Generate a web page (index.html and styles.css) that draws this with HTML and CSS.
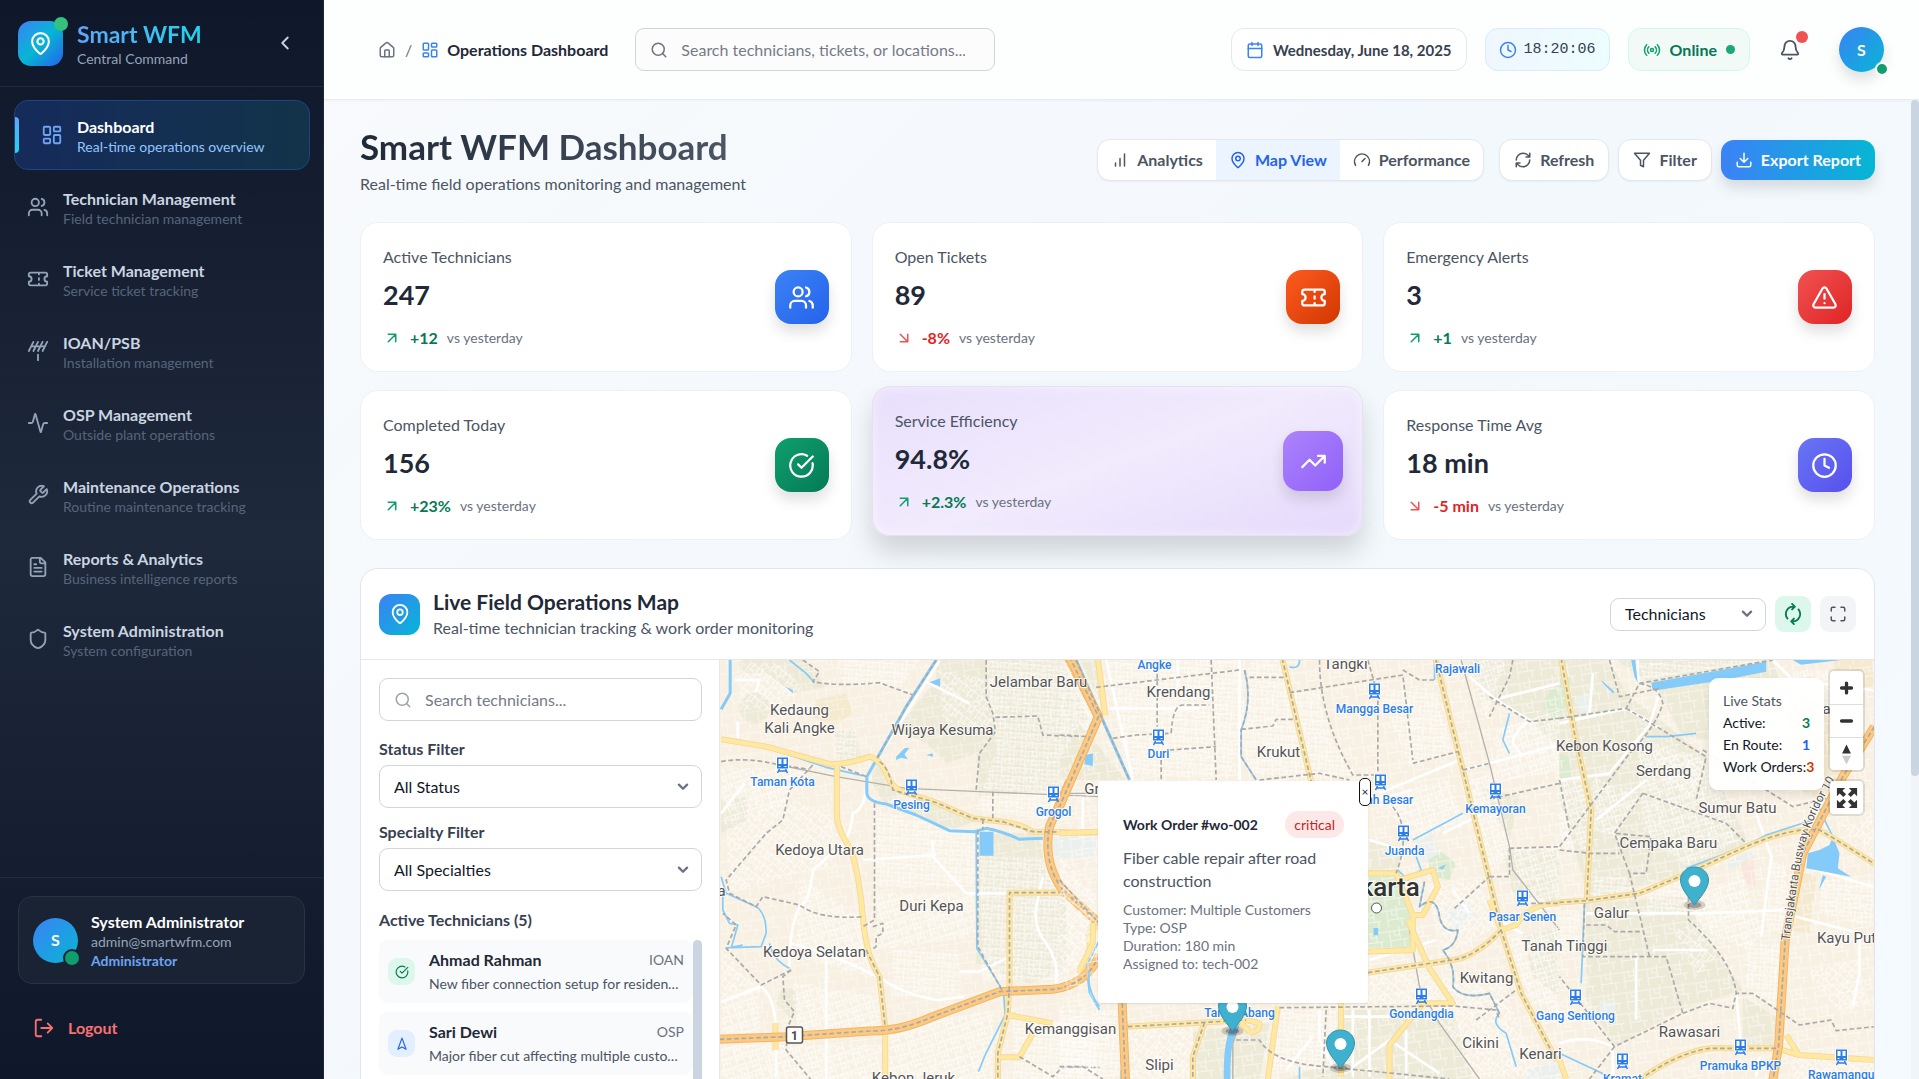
FILE: index.html
```html
<!DOCTYPE html>
<html lang="en">
<head>
<meta charset="utf-8">
<meta name="viewport" content="width=device-width, initial-scale=1">
<title>Smart WFM Dashboard</title>
<link rel="stylesheet" href="styles.css">
</head>
<body>
<svg class="sprite" aria-hidden="true">
  <symbol id="i-pin" viewBox="0 0 24 24"><path d="M20 10c0 4.993-5.539 10.193-7.399 11.799a1 1 0 0 1-1.202 0C9.539 20.193 4 14.993 4 10a8 8 0 0 1 16 0"/><circle cx="12" cy="10" r="3"/></symbol>
  <symbol id="i-left" viewBox="0 0 24 24"><path d="m15 18-6-6 6-6"/></symbol>
  <symbol id="i-down" viewBox="0 0 24 24"><path d="m5 8 7 7 7-7"/></symbol>
  <symbol id="i-grid" viewBox="0 0 24 24"><rect width="7" height="9" x="3" y="3" rx="1"/><rect width="7" height="5" x="14" y="3" rx="1"/><rect width="7" height="9" x="14" y="12" rx="1"/><rect width="7" height="5" x="3" y="16" rx="1"/></symbol>
  <symbol id="i-users" viewBox="0 0 24 24"><path d="M16 21v-2a4 4 0 0 0-4-4H6a4 4 0 0 0-4 4v2"/><circle cx="9" cy="7" r="4"/><path d="M22 21v-2a4 4 0 0 0-3-3.87M16 3.13a4 4 0 0 1 0 7.75"/></symbol>
  <symbol id="i-ticket" viewBox="0 0 24 24"><path d="M2 9a3 3 0 0 1 0 6v2a2 2 0 0 0 2 2h16a2 2 0 0 0 2-2v-2a3 3 0 0 1 0-6V7a2 2 0 0 0-2-2H4a2 2 0 0 0-2 2ZM13 5v2M13 17v2M13 11v2"/></symbol>
  <symbol id="i-antenna" viewBox="0 0 24 24"><path d="M2 12 7 2M7 12l5-10M12 12l5-10M17 12l5-10M4.500 7h15M12 16v6"/></symbol>
  <symbol id="i-activity" viewBox="0 0 24 24"><path d="M22 12h-2.480a2 2 0 0 0-1.930 1.460l-2.350 8.360a.25.25 0 0 1-.48 0L9.240 2.180a.25.25 0 0 0-.48 0l-2.350 8.360A2 2 0 0 1 4.490 12H2"/></symbol>
  <symbol id="i-wrench" viewBox="0 0 24 24"><path d="M14.700 6.300a1 1 0 0 0 0 1.400l1.600 1.600a1 1 0 0 0 1.400 0l3.770-3.770a6 6 0 0 1-7.940 7.940l-6.910 6.910a2.120 2.120 0 0 1-3-3l6.910-6.910a6 6 0 0 1 7.940-7.940l-3.760 3.760z"/></symbol>
  <symbol id="i-file" viewBox="0 0 24 24"><path d="M15 2H6a2 2 0 0 0-2 2v16a2 2 0 0 0 2 2h12a2 2 0 0 0 2-2V7ZM14 2v4a2 2 0 0 0 2 2h4M10 9H8M16 13H8M16 17H8"/></symbol>
  <symbol id="i-shield" viewBox="0 0 24 24"><path d="M20 13c0 5-3.500 7.500-7.660 8.950a1 1 0 0 1-.67-.01C7.500 20.500 4 18 4 13V6a1 1 0 0 1 1-1c2 0 4.500-1.200 6.240-2.720a1.170 1.170 0 0 1 1.520 0C14.510 3.810 17 5 19 5a1 1 0 0 1 1 1z"/></symbol>
  <symbol id="i-logout" viewBox="0 0 24 24"><path d="M9 21H5a2 2 0 0 1-2-2V5a2 2 0 0 1 2-2h4M16 17l5-5-5-5M21 12H9"/></symbol>
  <symbol id="i-home" viewBox="0 0 24 24"><path d="M15 21v-8a1 1 0 0 0-1-1h-4a1 1 0 0 0-1 1v8"/><path d="M3 10a2 2 0 0 1 .709-1.528l7-5.999a2 2 0 0 1 2.582 0l7 5.999A2 2 0 0 1 21 10v9a2 2 0 0 1-2 2H5a2 2 0 0 1-2-2z"/></symbol>
  <symbol id="i-search" viewBox="0 0 24 24"><circle cx="11" cy="11" r="8"/><path d="m21 21-4.300-4.300"/></symbol>
  <symbol id="i-calendar" viewBox="0 0 24 24"><path d="M8 2v4M16 2v4M3 10h18"/><rect width="18" height="18" x="3" y="4" rx="2"/></symbol>
  <symbol id="i-clock" viewBox="0 0 24 24"><circle cx="12" cy="12" r="10"/><path d="M12 6v6l4 2"/></symbol>
  <symbol id="i-radio" viewBox="0 0 24 24"><path d="M4.900 19.100C1 15.200 1 8.800 4.900 4.900M7.800 16.200c-2.300-2.300-2.300-6.100 0-8.500M16.200 7.800c2.300 2.300 2.300 6.100 0 8.500M19.100 4.900C23 8.800 23 15.100 19.100 19"/><circle cx="12" cy="12" r="2"/></symbol>
  <symbol id="i-bell" viewBox="0 0 24 24"><path d="M10.268 21a2 2 0 0 0 3.464 0M3.262 15.326A1 1 0 0 0 4 17h16a1 1 0 0 0 .74-1.673C19.410 13.956 18 12.499 18 8A6 6 0 0 0 6 8c0 4.499-1.411 5.956-2.738 7.326"/></symbol>
  <symbol id="i-bars" viewBox="0 0 24 24"><path d="M12 20V10M18 20V4M6 20v-4"/></symbol>
  <symbol id="i-gauge" viewBox="0 0 24 24"><path d="m12 14 4-4M3.340 19a10 10 0 1 1 17.320 0"/></symbol>
  <symbol id="i-refresh" viewBox="0 0 24 24"><path d="M3 12a9 9 0 0 1 9-9 9.750 9.750 0 0 1 6.740 2.740L21 8M21 3v5h-5M21 12a9 9 0 0 1-9 9 9.750 9.750 0 0 1-6.740-2.740L3 16M8 16H3v5"/></symbol>
  <symbol id="i-filter" viewBox="0 0 24 24"><path d="M22 3H2l8 9.460V19l4 2v-8.540z"/></symbol>
  <symbol id="i-download" viewBox="0 0 24 24"><path d="M21 15v4a2 2 0 0 1-2 2H5a2 2 0 0 1-2-2v-4M7 10l5 5 5-5M12 15V3"/></symbol>
  <symbol id="i-up" viewBox="0 0 24 24"><path d="M7 7h10v10M7 17 17 7"/></symbol>
  <symbol id="i-fall" viewBox="0 0 24 24"><path d="m7 7 10 10M17 7v10H7"/></symbol>
  <symbol id="i-alert" viewBox="0 0 24 24"><path d="m21.730 18-8-14a2 2 0 0 0-3.480 0l-8 14A2 2 0 0 0 4 21h16a2 2 0 0 0 1.730-3M12 9v4M12 17h.01"/></symbol>
  <symbol id="i-check" viewBox="0 0 24 24"><path d="M21.801 10A10 10 0 1 1 17 3.335M9 11l3 3L22 4"/></symbol>
  <symbol id="i-trend" viewBox="0 0 24 24"><path d="m22 7-8.500 8.500-5-5L2 17M16 7h6v6"/></symbol>
  <symbol id="i-cycle" viewBox="0 0 24 24"><path d="M14 4h-2a8 8 0 0 0-6 13M11 1l3 3-3 3M10 20h2a8 8 0 0 0 6-13M13 17l-3 3 3 3"/></symbol>
  <symbol id="i-full" viewBox="0 0 24 24"><path d="M8 3H5a2 2 0 0 0-2 2v3M21 8V5a2 2 0 0 0-2-2h-3M3 16v3a2 2 0 0 0 2 2h3M16 21h3a2 2 0 0 0 2-2v-3"/></symbol>
  <symbol id="i-nav" viewBox="0 0 24 24"><path d="m12 2 7 19-7-4-7 4z"/></symbol>
  <symbol id="i-expand" viewBox="0 0 24 24"><path fill="currentColor" stroke="none" d="M1 1h9L7 4l4 4-3 3-4-4-3 3zM23 1v9l-3-3-4 4-3-3 4-4-3-3zM1 23v-9l3 3 4-4 3 3-4 4 3 3zM23 23h-9l3-3-4-4 3-3 4 4 3-3z"/></symbol>
  <symbol id="i-station" viewBox="0 0 14 17"><g stroke="#fff" stroke-width="1"><path fill="#2b7de9" d="M1 0h12v12H1z"/></g><path fill="#fff" stroke="none" d="M3 2h3v5H3zM8 2h3v5H8zM3 9h2v1H3zM9 9h2v1H9z"/><path stroke="#2b7de9" stroke-width="1.500" fill="none" d="m4 12-2 4M10 12l2 4M3 14h8"/></symbol>
  <symbol id="i-marker" viewBox="0 0 30 46"><ellipse cx="15" cy="39" rx="11" ry="5" fill="#000" opacity=".16" stroke="none"/><ellipse cx="15" cy="39" rx="7" ry="3" fill="#000" opacity=".25" stroke="none"/><path fill="#3fb1ce" stroke="#3592a9" stroke-width="1" d="M15 1C7 1 1 7 1 14c0 9 9 18 14 25 5-7 14-16 14-25C29 7 23 1 15 1z"/><circle cx="15" cy="15" r="6" fill="#fff" stroke="none"/></symbol>
</svg>

<div class="app">
  <aside class="sidebar">
    <div class="brand">
      <span class="logo"><svg class="icon i24"><use href="#i-pin"/></svg></span>
      <div class="brand-text"><strong>Smart WFM</strong><span>Central Command</span></div>
      <button class="collapse" aria-label="Collapse sidebar"><svg class="icon i22"><use href="#i-left"/></svg></button>
    </div>
    <nav class="nav">
      <a href="#" class="nav-item active"><svg class="icon i22"><use href="#i-grid"/></svg><span><b>Dashboard</b><small>Real-time operations overview</small></span></a>
      <a href="#" class="nav-item"><svg class="icon i22"><use href="#i-users"/></svg><span><b>Technician Management</b><small>Field technician management</small></span></a>
      <a href="#" class="nav-item"><svg class="icon i22"><use href="#i-ticket"/></svg><span><b>Ticket Management</b><small>Service ticket tracking</small></span></a>
      <a href="#" class="nav-item"><svg class="icon i22"><use href="#i-antenna"/></svg><span><b>IOAN/PSB</b><small>Installation management</small></span></a>
      <a href="#" class="nav-item"><svg class="icon i22"><use href="#i-activity"/></svg><span><b>OSP Management</b><small>Outside plant operations</small></span></a>
      <a href="#" class="nav-item"><svg class="icon i22"><use href="#i-wrench"/></svg><span><b>Maintenance Operations</b><small>Routine maintenance tracking</small></span></a>
      <a href="#" class="nav-item"><svg class="icon i22"><use href="#i-file"/></svg><span><b>Reports &amp; Analytics</b><small>Business intelligence reports</small></span></a>
      <a href="#" class="nav-item"><svg class="icon i22"><use href="#i-shield"/></svg><span><b>System Administration</b><small>System configuration</small></span></a>
    </nav>
    <div class="account">
      <div class="profile">
        <span class="avatar">S</span>
        <div class="profile-text"><b>System Administrator</b><span>admin@smartwfm.com</span><em>Administrator</em></div>
      </div>
      <button class="logout"><svg class="icon i22"><use href="#i-logout"/></svg>Logout</button>
    </div>
  </aside>

  <div class="main">
    <header class="topbar">
      <nav class="crumbs" aria-label="Breadcrumb">
        <a href="#" aria-label="Home"><svg class="icon i18"><use href="#i-home"/></svg></a><span>/</span>
        <a href="#" class="here"><svg class="icon i18"><use href="#i-grid"/></svg>Operations Dashboard</a>
      </nav>
      <label class="field top-search"><svg class="icon i18"><use href="#i-search"/></svg><input type="search" aria-label="Search" placeholder="Search technicians, tickets, or locations..."></label>
      <div class="status">
        <span class="pill date"><svg class="icon i18"><use href="#i-calendar"/></svg>Wednesday, June 18, 2025</span>
        <span class="pill time"><svg class="icon i18"><use href="#i-clock"/></svg>18:20:06</span>
        <span class="pill online"><svg class="icon i18"><use href="#i-radio"/></svg>Online<i class="dot"></i></span>
        <button class="bell" aria-label="Notifications"><svg class="icon i22"><use href="#i-bell"/></svg></button>
        <button class="avatar top-avatar" aria-label="Account">S</button>
      </div>
    </header>

    <div class="scroller">
    <main class="content">
      <div class="page-head">
        <div>
          <h1>Smart WFM Dashboard</h1>
          <p>Real-time field operations monitoring and management</p>
        </div>
        <div class="actions">
          <div class="tabs">
            <button class="tab"><svg class="icon i18"><use href="#i-bars"/></svg>Analytics</button>
            <button class="tab selected"><svg class="icon i18"><use href="#i-pin"/></svg>Map View</button>
            <button class="tab"><svg class="icon i18"><use href="#i-gauge"/></svg>Performance</button>
          </div>
          <button class="btn"><svg class="icon i18"><use href="#i-refresh"/></svg>Refresh</button>
          <button class="btn"><svg class="icon i18"><use href="#i-filter"/></svg>Filter</button>
          <button class="btn primary"><svg class="icon i18"><use href="#i-download"/></svg>Export Report</button>
        </div>
      </div>

      <section class="cards" aria-label="Key metrics">
        <article class="card"><div><h2>Active Technicians</h2><strong>247</strong><p class="up"><svg class="icon i18"><use href="#i-up"/></svg><b>+12</b><span>vs yesterday</span></p></div><span class="tile blue"><svg class="icon i27"><use href="#i-users"/></svg></span></article>
        <article class="card"><div><h2>Open Tickets</h2><strong>89</strong><p class="down"><svg class="icon i18"><use href="#i-fall"/></svg><b>-8%</b><span>vs yesterday</span></p></div><span class="tile orange"><svg class="icon i27"><use href="#i-ticket"/></svg></span></article>
        <article class="card"><div><h2>Emergency Alerts</h2><strong>3</strong><p class="up"><svg class="icon i18"><use href="#i-up"/></svg><b>+1</b><span>vs yesterday</span></p></div><span class="tile red"><svg class="icon i27"><use href="#i-alert"/></svg></span></article>
        <article class="card"><div><h2>Completed Today</h2><strong>156</strong><p class="up"><svg class="icon i18"><use href="#i-up"/></svg><b>+23%</b><span>vs yesterday</span></p></div><span class="tile green"><svg class="icon i27"><use href="#i-check"/></svg></span></article>
        <article class="card lifted"><div><h2>Service Efficiency</h2><strong>94.8%</strong><p class="up"><svg class="icon i18"><use href="#i-up"/></svg><b>+2.3%</b><span>vs yesterday</span></p></div><span class="tile purple"><svg class="icon i27"><use href="#i-trend"/></svg></span></article>
        <article class="card"><div><h2>Response Time Avg</h2><strong>18 min</strong><p class="down"><svg class="icon i18"><use href="#i-fall"/></svg><b>-5 min</b><span>vs yesterday</span></p></div><span class="tile indigo"><svg class="icon i27"><use href="#i-clock"/></svg></span></article>
      </section>

      <section class="ops">
        <div class="ops-head">
          <span class="ops-logo"><svg class="icon i22"><use href="#i-pin"/></svg></span>
          <div class="ops-title"><h2>Live Field Operations Map</h2><p>Real-time technician tracking &amp; work order monitoring</p></div>
          <span class="pick small"><select aria-label="Map layer"><option>Technicians</option></select><svg class="icon i18"><use href="#i-down"/></svg></span>
          <button class="square live" aria-label="Auto refresh"><svg class="icon i22"><use href="#i-cycle"/></svg></button>
          <button class="square" aria-label="Full screen"><svg class="icon i18"><use href="#i-full"/></svg></button>
        </div>
        <div class="ops-body">
          <div class="panel">
            <label class="field"><svg class="icon i18"><use href="#i-search"/></svg><input type="search" aria-label="Search technicians" placeholder="Search technicians..."></label>
            <label class="caption" for="status">Status Filter</label>
            <span class="pick"><select id="status"><option>All Status</option></select><svg class="icon i18"><use href="#i-down"/></svg></span>
            <label class="caption" for="specialty">Specialty Filter</label>
            <span class="pick"><select id="specialty"><option>All Specialties</option></select><svg class="icon i18"><use href="#i-down"/></svg></span>
            <h3>Active Technicians (5)</h3>
            <div class="tech-wrap">
              <ul class="techs">
                <li><span class="badge ok"><svg class="icon i14"><use href="#i-check"/></svg></span><div><p><b>Ahmad Rahman</b><span>IOAN</span></p><small>New fiber connection setup for residential customer</small></div></li>
                <li><span class="badge go"><svg class="icon i14"><use href="#i-nav"/></svg></span><div><p><b>Sari Dewi</b><span>OSP</span></p><small>Major fiber cut affecting multiple customers</small></div></li>
              </ul>
              <i class="bar"></i>
            </div>
          </div>

          <div class="map">
            <svg class="map-art" viewBox="720 660 1155 824" preserveAspectRatio="xMidYMin slice" role="img" aria-label="Map of Jakarta">
              <defs>
                <pattern id="st1" width="34" height="26" patternUnits="userSpaceOnUse" patternTransform="rotate(4)"><path d="M0 5H34M0 18H20M6 0V18M20 5V26M28 5V20" class="st"/></pattern>
                <pattern id="st2" width="30" height="38" patternUnits="userSpaceOnUse" patternTransform="rotate(38)"><path d="M0 8H30M8 8V38M20 0V26M8 26H30" class="st"/></pattern>
                <pattern id="st3" width="42" height="30" patternUnits="userSpaceOnUse" patternTransform="rotate(-18)"><path d="M0 4H42M0 18H26M5 4V30M15 0V18M26 4V30M36 4V16" class="st"/></pattern>
                <pattern id="st4" width="70" height="62" patternUnits="userSpaceOnUse" patternTransform="rotate(-8)"><path d="M0 12H70M18 12V62M48 0V40M18 40H70M32 12V26H48M60 40V62" class="st"/></pattern>
              </defs>
              <rect x="720" y="660" width="1155" height="824" fill="#f8f1e3"/>
              <!-- West -->
              <g transform="translate(720 650) scale(.33333)">
                <path class="land" d="M60 30h200l60 80-100 20-80-60H60zM640 100l170 40 150-60 120 130-60 210-240 20-10-130-90 30-60-60-90-40zM650 30h380l80 190-160-20-140-60-160-30zM780 550h180l20 130 60 60v220l-110 40-160-60zM465 330l90 100-60 30-40-60zM600 430l180 80-90 30-120-60zM345 240l60 0 20 80-70 20zM5 450l80-20 0 80-80 40zM190 1010l40 10 0 100-60-60z"/>
                <path class="sand" d="M290 150l90-20 20 60-60 40-60-30z"/>
                <path class="gray" d="M1000 565l130-5 0 60-130 5z"/>
                <circle cx="105" cy="175" r="46" class="land"/>
                <path fill="url(#st2)" d="M60 40h130l60 80-90 60H60zM650 60l170 30 0 160-150-40zM20 540l180-100 140 60 10 150-120 20-200 60zM5 900l110 100-110 50z"/>
                <path fill="url(#st1)" d="M800 30h240l90 180-140 300-220-30 60-180zM465 480l300 70 5 160-300 0zM780 620l180 0 60 110v260H790zM340 240h70v100h-60zM520 900h200v140H520zM880 1110h250v180H880zM350 30h250l-60 90-170-20z"/>
                <path fill="url(#st3)" d="M240 680l180 120 40 180-230-60zM470 730l290 0 10 130-300 40zM220 1000l260 40v90l-260 10zM5 1185h480v105H5zM510 1140l310-60v210H510zM5 355l270 0-80 110-180 60zM120 1000l0 150-110 0v-100z"/>
                <path fill="url(#st4)" d="M5 30h1135v1260H5z" opacity=".6"/>
                <path class="road" d="M660 32 490 300M45 90h75l-10 35M55 215v50M620 95l130 65M75 400l-70 90M440 420q-10 60-40 70-5 60-30 90L280 660q-10 100-40 110-30 60-30 180M215 880q180 50 310 130 60 30 130 40l80-10M125 1010q40 30 45 130v140M5 1055l120-45M640 570v50l100 110h130M970 680l-20 90q-10 60 30 110 40 60 30 120M320 920v370M430 630l220-15M720 965h60l80-40M1000 440v120M1090 440v120"/>
                <path class="rail" d="M180 345 350 380 560 415 780 425 1140 440"/>
                <path class="water" d="M32 30V130L5 178M650 30 560 170 470 330 442 380V430q3 25 58 32l90 33 100 47 75 3 35-10q50 10 100 33l70-3"/>
                <path class="stream" d="M210 30l50 40 25 28M5 272l135 20 180 60 110 25M5 680l15 50 90 40q30 20 30 80l-15 40-90 3M20 895l50-10M10 720v60l20 40 25 5-20 70M770 545l2 350 80 130 5 70-60 120-20 50M1140 870l-40 80 10 80 30 50M150 880q10 50 60 75"/>
                <path class="lake" d="M780 545h42v72h-42zM630 97l32-12v25zM530 320l25-25 15-2-15 20 10 15-20-5-15 7zM620 315l20-5v10zM1098 310l22 10v30h-22zM198 110l22 10v10z"/>
                <path class="yedge" d="M5 268 140 290 330 342Q380 345 450 320 480 325 500 370 520 420 560 428L650 458 760 505 850 515Q900 520 940 545L1140 548M352 345V500Q355 540 395 600 420 680 430 800 440 920 480 980L497 1130V1290M1030 728H870V1000L865 1090 835 1210V1290M865 1095 1000 1120M835 1222H900L940 1150M1140 820 1110 850V900L1080 970M168 1120v80"/>
                <path class="yellow" d="M5 268 140 290 330 342Q380 345 450 320 480 325 500 370 520 420 560 428L650 458 760 505 850 515Q900 520 940 545L1140 548M352 345V500Q355 540 395 600 420 680 430 800 440 920 480 980L497 1130V1290M1030 728H870V1000L865 1090 835 1210V1290M865 1095 1000 1120M835 1222H900L940 1150M1140 820 1110 850V900L1080 970M168 1120v80"/>
                <path class="oedge" d="M1045 20 1137 200 990 530Q970 640 1030 720L1140 820M0 1168 200 1160 450 1143Q540 1145 640 1100L840 1025 1000 1018Q1100 1005 1140 915"/>
                <path class="orange-road" d="M1045 20 1137 200 990 530Q970 640 1030 720L1140 820M0 1168 200 1160 450 1143Q540 1145 640 1100L840 1025 1000 1018Q1100 1005 1140 915"/>
                <path class="dash" d="M5 335Q80 320 180 345L270 358M280 345 210 420 190 510 140 550 20 690 30 730 110 770 130 740 240 765Q300 810 430 800M465 460V810L430 830M460 830l30-10v30l-20 10v30l-15 10M775 540V890L850 1025M215 960 125 1005 20 895 50 825 10 790M215 960 190 980 195 1050 225 1085 205 1130 200 1200 275 1290M250 30 300 65 280 95Q350 110 480 98L580 135M800 30V140L820 190 828 245 780 310 770 420M820 425V505M828 202 955 198 970 255 1110 262M900 1220 1000 1280 1030 1252H1140M650 30 560 170 470 330M790 508v30M440 900l40 80 17 150M480 335q30 20 40 85L650 458 760 505 850 515 940 545 1140 548M1030 728H870V1000L865 1090 835 1210V1290M1045 20 1137 200 990 530Q970 640 1030 720L1140 820M0 1168 200 1160 450 1143Q540 1145 640 1100L840 1025 1000 1018Q1100 1005 1140 915M365 350l75 30"/>
              </g>
              <!-- Centre -->
              <g transform="translate(1060 640) scale(.33333)">
                <path class="land" d="M1220 60h280v260l-90-80-150-70zM60 250l140 170H0v-60zM930 600l100 20-20 80-80 0zM400 1170l230-20-30 167H400zM1330 630l170 0v160l-140-30zM60 60l50 0 20 140zM850 1110l330 0 60 207H680l110-40zM1260 440l120 30-30 130zM1390 880l110-20v210l-80-60z"/>
                <path class="park" d="M925 708h90l45 130v85H925zM1105 660l40-25 45 35-20 50-50-10zM1475 150l25-20v110q-50-20-50-50z"/>
                <path class="gray" d="M1070 600l50-20 20 60-50 30zM0 590l60 0v50l-60 20zM1150 820l70-40 30 50-60 40zM1400 1290l100-30v60h-100z"/>
                <path fill="url(#st1)" d="M140 60h400l20 180-50 170H200zM570 60h90l90 350H580l-30-80zM700 160l80 0q20 150 110 245l-130 10zM960 160l160-20 60 190-130 50zM640 1110h190v180l-200 0zM0 1110h180v200H0z"/>
                <path fill="url(#st3)" d="M1220 60h120l-60 170zM1310 270l190-60v180l-190 40zM1230 420l60-20 70 220-70 90zM1360 620h140v170h-120zM940 480l220-60 60 120-140 60zM1340 900l160-40v260l-80-30z"/>
                <path fill="url(#st2)" d="M1140 1010h180l120 300h-200l-100-170zM1100 740l160-20 50 140-160 90zM220 1165h180v150H210zM930 1000l170 0 70 90-250 0zM0 640l110 130v180L0 1010z"/>
                <path fill="url(#st4)" d="M0 60h1500v1257H0z" opacity=".8"/>
                <path class="road" d="M150 205h270M1210 390l290-75M960 460l240-100M925 490l130-40M1230 110l80 70 100 60q-50 40-50 70l30 40M1300 180l200-50M930 600l130 40M1180 750l50 70M780 1110v90l40 80M850 1130h140M880 1110v200M930 1110v200M760 1190l-80 100M840 1310l150-110 150 100M1040 1170v147M540 60v360M1150 580l120-60M1390 880l-60-30 170-60M140 60l80 360M355 60v80M1130 900l-200 60"/>
                <path class="rail" d="M1205 60 1290 370 1350 620 1360 690 1500 870M1045 840 1080 1040 1140 1150 1260 1317M0 460h115M540 1150l-20 60v107"/>
                <path class="water" d="M50 60 125 230 210 420"/>
                <path class="river" d="M530 1150Q500 1200 503 1317"/>
                <path class="stream" d="M555 90Q580 180 545 270V350L590 420M1060 600l150-80M1070 650l15 40-40 30-30-30M1095 725 1080 800Q1130 760 1140 830 1150 880 1195 870 1190 920 1150 930 1190 980 1180 1040 1210 1080 1290 1060L1320 1120Q1290 1150 1340 1180L1370 1280M1350 220l-20 80 20 40M90 990q-10 60 30 110M1125 60v60M720 60q0 30-30 20M720 1280v37M185 1290v27"/>
                <path class="lake" d="M78 345l22-5v38l-25-5zM942 864h14v22h-14zM1135 685l25-12-10 15z"/>
                <path class="yedge" d="M115 55 137 225M668 55 755 425M1128 55 1210 390 1290 720 1325 870 1385 1060 1490 1260M1325 870Q1250 950 1180 960T925 998M1325 870 1370 855Q1410 790 1500 790M925 700H1010L1060 825V930L925 935M1045 840 1110 985 1180 1090H1090L990 1215V1317M1020 720 1120 690 1135 740 1090 825H1060M200 1160 420 1148 560 1140 600 1150q0 30-30 25l-25-25M435 1148 400 1250V1317M655 1100 625 1317M845 1090V1310M1290 780l35 90M0 580l115-5M100 850v60l-40 80"/>
                <path class="yellow" d="M115 55 137 225M668 55 755 425M1128 55 1210 390 1290 720 1325 870 1385 1060 1490 1260M1325 870Q1250 950 1180 960T925 998M1325 870 1370 855Q1410 790 1500 790M925 700H1010L1060 825V930L925 935M1045 840 1110 985 1180 1090H1090L990 1215V1317M1020 720 1120 690 1135 740 1090 825H1060M200 1160 420 1148 560 1140 600 1150q0 30-30 25l-25-25M435 1148 400 1250V1317M655 1100 625 1317M845 1090V1310M1290 780l35 90M0 580l115-5M100 850v60l-40 80"/>
                <path class="oedge" d="M188 1090 198 1320M30 50 117 230 0 500"/><path class="orange-road" d="M188 1090 198 1320M30 50 117 230 0 500"/>
                <path class="dash" d="M0 285 90 290M110 142 540 90M160 295 230 285 335 280Q340 195 370 195H450M455 60 470 420M570 112H680M545 268 640 258 650 238H710M690 158 1030 105 1060 360M780 60Q780 230 880 405H960M925 60 945 130M955 160V400M1060 370 1195 335M1360 60 1350 110 1290 230M1290 170 1410 245 1500 235M600 420 780 400 870 420M293 80V260M305 360V420M330 330l140-10M1500 430 1300 475M1350 625 1500 620M1290 710H1350V620M1185 805 1290 710M660 1103 1180 1098 1310 1110 1320 1140M530 1200H600Q640 1270 800 1280L1170 1317M800 1110 790 1310M1250 1140l120-90M1210 390l80-20M1030 90l50 30h50M555 90Q580 180 545 270V350L590 420M188 1090 198 1320M205 1160 420 1148 560 1140M435 1148 400 1250V1317M50 60 125 230 210 420M30 50 117 230 0 500M1000 500q50 60 20 170l-10 30M668 55 755 425M1128 55 1210 390 1290 720 1325 870 1385 1060 1490 1260M1325 870Q1250 950 1180 960T925 998M1095 725 1080 800Q1130 760 1140 830 1150 880 1195 870 1190 920 1150 930 1190 980 1180 1040 1210 1080 1290 1060L1320 1120M1415 790h85M0 1280h70l60 37M0 720l110 120"/>
              </g>
              <!-- East -->
              <g transform="translate(1560 560) scale(.33333)">
                <path class="land" d="M0 300h150l50 100 240 190 130 260-200 100-280 70-90-300zM170 300h470l30 100-140 150-160-20-80-150zM80 1030l290-20 180 280-190 60-190 110-90-140zM550 1310l100 60-10 90h-90z"/>
                <path class="sand" d="M690 400l180 60v140l-80 120-120-50zM710 930l60 20-20 170-70-10zM820 300h120v90l-100-20z"/>
                <path class="park" d="M0 340l30 10 12 100-42 10zM0 580l30 10 5 60-35 10z"/>
                <path class="gray" d="M500 910l70-40 20 20-80 40zM50 410l40-10v50l-30 10zM120 1320l50 10-10 60-40-10z"/>
                <path fill="#f9e6dc" d="M540 910l40-20 10 90-30-10z"/>
                <path fill="url(#st3)" d="M230 530l220 70 90 240-160 80-130-110zM100 650l140 60-70 120-70-20zM0 660l80 0v210H0zM390 1020l160-80 60 180-50 50-130-60zM700 330l110 0 20 60-130 30z"/>
                <path fill="url(#st1)" d="M630 900l50 20 0 210-60-30zM780 960h160v140l-160-40zM560 1150h100v200l-100-60zM100 950h100l30 50-130 10zM270 960l110-20v120H260zM240 310l380-10-370 60zM0 1050h60v130H0z"/>
                <path fill="url(#st2)" d="M340 1110l80-20 60 90-70 70zM740 1230l150-30 40 130-90 30zM800 770l80 30 60-40v130zM290 560l140 50-30 110-120-80zM700 1490h240v70H700z"/>
                <path fill="url(#st4)" d="M-10 300h960v1260H-10z" opacity=".8"/>
                <path class="road" d="M0 660 150 640 270 495 300 400M100 340 90 460M590 760l45 130-30 240M690 1065l210 55v120M530 1300l15 160M0 490l200-45 100 60M235 370v-70M640 300l60 60 240 30M740 920l200 60M440 1170l-160 0M80 1060h350l240-10M110 780l150-120M0 1450q80-30 160 10v100M470 520l200-120M600 1490l-10 60M900 1240l-20 100M230 1180v200"/>
                <path class="stream" d="M380 925Q560 860 620 825L760 780M790 770l30 60 120 75M770 725l25 50M75 1030l-10 240M0 1480l150 70M260 530h60l90-10"/>
                <path class="lake" d="M275 368 620 305v30L480 362 330 385l-50 7zM700 300h145l-120 14zM780 870l30-15 10-25 20 50-5 45 40 25-135-25 5-45zM790 945l10 5-22 40zM125 360l40 35-5 5-30-30zM215 300h12l8 70-10-20z"/>
                <path class="yedge" d="M5 295 45 520 95 750 82 1020M0 1027 80 1022 240 1000 360 950 560 860Q700 800 780 810 850 850 945 912M240 1560Q350 1480 450 1465L650 1465 720 1485 945 1500M680 1425l35 55M0 1500l20 57"/>
                <path class="yellow" d="M5 295 45 520 95 750 82 1020M0 1027 80 1022 240 1000 360 950 560 860Q700 800 780 810 850 850 945 912M240 1560Q350 1480 450 1465L650 1465 720 1485 945 1500M680 1425l35 55M0 1500l20 57"/>
                <path class="oedge" d="M945 500 850 650 730 880 677 1140 657 1460 640 1560"/>
                <path class="orange-road" d="M945 500 850 650 730 880 677 1140 657 1460 640 1560"/>
                <path class="dash" d="M0 475 200 445 240 370 640 300M150 300 180 410 300 385M240 370Q300 380 310 430 290 500 210 580L0 860M200 445 440 590 410 720M430 570l270 170 100-25M250 700 500 790 560 850M250 700 165 820 210 940H260L275 830 165 820M0 870 90 880H180M0 660l30 150M210 940 270 1190M80 1095H140L165 1115H250M75 1030 70 1190H320L370 1360 165 1460 0 1250M370 1360 450 1330 520 1345 530 1300 580 1300 720 1395 815 1380 830 1412 945 1400M387 1010V1080Q520 1200 530 1300M165 1460 90 1557M5 295 45 520 95 750 82 1020M0 1027 80 1022 240 1000 360 950 560 860Q700 800 780 810 850 850 945 912M240 1560Q350 1480 450 1465L650 1465M945 500 850 650 730 880 677 1140 657 1460 640 1560"/>
              </g>
              <g class="place">
                <text x="800" y="715">Kedaung</text><text x="800" y="733">Kali Angke</text><text x="943" y="735">Wijaya Kesuma</text><text x="1039" y="687">Jelambar Baru</text><text x="820" y="855">Kedoya Utara</text><text x="932" y="911">Duri Kepa</text><text x="815" y="957">Kedoya Selatan</text><text x="1071" y="1034">Kemanggisan</text><text x="914" y="1083">Kebon Jeruk</text><text x="1107" y="794">Grogol</text><text x="722" y="896">a</text>
                <text x="1179" y="697">Krendang</text><text x="1346" y="669">Tangki</text><text x="1279" y="757">Krukut</text><text x="1565" y="951">Tanah Tinggi</text><text x="1487" y="983">Kwitang</text><text x="1481" y="1048">Cikini</text><text x="1541" y="1059">Kenari</text><text x="1160" y="1070">Slipi</text>
                <text x="1605" y="751">Kebon Kosong</text><text x="1664" y="776">Serdang</text><text x="1738" y="813">Sumur Batu</text><text x="1669" y="848">Cempaka Baru</text><text x="1612" y="918">Galur</text><text x="1853" y="943">Kayu Putih</text><text x="1690" y="1037">Rawasari</text><text x="1827" y="714">a</text>
              </g>
              <text class="city" x="1376" y="896">Jakarta</text>
              <circle cx="1377" cy="908" r="5" fill="#fff" stroke="#555" stroke-width="1"/>
              <path id="busway" d="M1790 941Q1796 890 1803 855T1835 780" fill="none"/>
              <text class="street"><textPath href="#busway">Transjakarta Busway Koridor 10</textPath></text>
              <g class="stop">
                <text x="783" y="786">Taman Kota</text><text x="912" y="809">Pesing</text><text x="1054" y="816">Grogol</text><text x="1155" y="669">Angke</text><text x="1458" y="673">Rajawali</text><text x="1375" y="713">Mangga Besar</text><text x="1159" y="758">Duri</text><text x="1379" y="804">Sawah Besar</text><text x="1496" y="813">Kemayoran</text><text x="1405" y="855">Juanda</text><text x="1523" y="921">Pasar Senen</text><text x="1422" y="1018">Gondangdia</text><text x="1240" y="1017">Tanah Abang</text><text x="1576" y="1020">Gang Sentiong</text><text x="1741" y="1070">Pramuka BPKP</text><text x="1623" y="1083">Kramat</text><text x="1845" y="1079">Rawamangun</text>
              </g>
              <g>
                <use href="#i-station" x="776" y="757" width="14" height="17"/><use href="#i-station" x="905" y="779" width="14" height="17"/><use href="#i-station" x="1047" y="786" width="14" height="17"/><use href="#i-station" x="1152" y="729" width="14" height="17"/><use href="#i-station" x="1368" y="683" width="14" height="17"/><use href="#i-station" x="1374" y="774" width="14" height="17"/><use href="#i-station" x="1489" y="783" width="14" height="17"/><use href="#i-station" x="1397" y="825" width="14" height="17"/><use href="#i-station" x="1516" y="890" width="14" height="17"/><use href="#i-station" x="1415" y="988" width="14" height="17"/><use href="#i-station" x="1569" y="989" width="14" height="17"/><use href="#i-station" x="1734" y="1039" width="14" height="17"/><use href="#i-station" x="1616" y="1053" width="14" height="17"/><use href="#i-station" x="1835" y="1049" width="14" height="17"/>
              </g>
              <rect x="787" y="1027" width="16" height="16" rx="2" fill="#fff" stroke="#555" stroke-width="1.500"/><text class="shield" x="795" y="1040">1</text>
              <use href="#i-marker" x="1218" y="992" width="30" height="46"/><use href="#i-marker" x="1326" y="1029" width="30" height="46"/><use href="#i-marker" x="1680" y="866" width="30" height="46"/>
            </svg>

            <div class="popup">
              <button class="close" aria-label="Close popup">×</button>
              <div class="popup-head"><b>Work Order #wo-002</b><span>critical</span></div>
              <p>Fiber cable repair after road construction</p>
              <ul><li>Customer: Multiple Customers</li><li>Type: OSP</li><li>Duration: 180 min</li><li>Assigned to: tech-002</li></ul>
            </div>
            <dl class="stats">
              <dt class="stats-title">Live Stats</dt>
              <div><dt>Active:</dt><dd class="g">3</dd></div>
              <div><dt>En Route:</dt><dd class="b">1</dd></div>
              <div><dt>Work Orders:</dt><dd class="o">3</dd></div>
            </dl>
            <div class="controls">
              <div class="ctrl">
                <button aria-label="Zoom in"><svg class="glyph" viewBox="0 0 29 29"><path d="M14.500 8.500a1.500 1.500 0 0 0-1.500 1.500v3h-3a1.500 1.500 0 0 0 0 3h3v3a1.500 1.500 0 0 0 3 0v-3h3a1.500 1.500 0 0 0 0-3h-3v-3a1.500 1.500 0 0 0-1.500-1.500z"/></svg></button>
                <button aria-label="Zoom out"><svg class="glyph" viewBox="0 0 29 29"><path d="M10 13a1.500 1.500 0 0 0 0 3h9a1.500 1.500 0 0 0 0-3z"/></svg></button>
                <button aria-label="Reset bearing"><svg class="glyph" viewBox="0 0 29 29"><path d="m10.500 14 4-8 4 8z"/><path fill="#ccc" d="m10.500 16 4 8 4-8z"/></svg></button>
              </div>
              <div class="ctrl"><button aria-label="Toggle full screen"><svg class="icon i22"><use href="#i-expand"/></svg></button></div>
            </div>
          </div>
        </div>
      </section>
    </main>
    <div class="rail-track" aria-hidden="true"><i></i></div>
    </div>
  </div>
</div>
</body>
</html>
```
FILE: styles.css
```css
*, *::before, *::after { box-sizing: border-box; }
body, h1, h2, h3, p, ul, dl, dd { margin: 0; padding: 0; }
body { font-family: Lato, "Liberation Sans", sans-serif; font-size: 16px; line-height: 24px; color: #1f2937; background: #f8fafc; }
ul { list-style: none; }
a { color: inherit; text-decoration: none; }
button, input, select { font: inherit; color: inherit; border: 0; background: none; padding: 0; margin: 0; }
button { cursor: pointer; }
.sprite { position: absolute; width: 0; height: 0; }
.icon { flex: none; fill: none; stroke: currentColor; stroke-width: 2; stroke-linecap: round; stroke-linejoin: round; width: 18px; height: 18px; }
.i14 { width: 14px; height: 14px; }
.i22 { width: 22px; height: 22px; }
.i24 { width: 25px; height: 25px; }
.i27 { width: 27px; height: 27px; }

.app { display: flex; height: 100vh; }

/* Sidebar */
.sidebar { flex: none; width: 324px; display: flex; flex-direction: column; background: linear-gradient(180deg, #0f172a, #1e293b 50%, #0f172a); border-right: 1px solid #1e293b; color: #fff; }
.brand { display: flex; align-items: center; gap: 14px; height: 87px; padding: 0 18px; border-bottom: 1px solid #1f2b3e; }
.logo { position: relative; display: grid; place-items: center; width: 45px; height: 45px; border-radius: 13px; background: linear-gradient(135deg, #3b82f6, #06b6d4 50%, #2563eb); }
.logo::after { content: ""; position: absolute; top: -4px; right: -5px; width: 14px; height: 14px; border-radius: 50%; background: #34c17f; }
.brand-text { flex: 1; display: grid; padding-top: 2px; }
.brand-text strong { justify-self: start; font-size: 23px; line-height: 28px; background: linear-gradient(90deg, #60a5fa, #22d3ee); background-clip: text; -webkit-background-clip: text; color: transparent; }
.brand-text span { font-size: 14px; line-height: 21px; color: #94a3b8; }
.collapse { display: grid; place-items: center; width: 40px; height: 40px; color: #cbd5e1; }
.nav { flex: 1; display: flex; flex-direction: column; gap: 2px; padding: 13px 13px 0 14px; }
.nav-item { position: relative; display: flex; align-items: center; gap: 14px; height: 70px; padding: 0 12px; color: #94a3b8; border: 1px solid transparent; border-radius: 14px; }
.nav-item span { display: grid; padding-top: 3px; }
.nav-item b { font-size: 16px; line-height: 20px; color: #cbd5e1; }
.nav-item small { font-size: 14px; line-height: 20px; color: #56657b; }
.nav-item.active { padding-left: 26px; color: #6ea3f5; border-color: #1f4480; background: linear-gradient(90deg, #152b5b, #123349); }
.nav-item.active b { color: #fff; }
.nav-item.active small { color: #93c5fd; }
.nav-item.active::before { content: ""; position: absolute; left: 0; top: 16px; width: 4px; height: 36px; border-radius: 0 4px 4px 0; background: linear-gradient(#60a5fa, #22d3ee); }
.account { padding: 18px 18px 25px; border-top: 1px solid #1f2b3e; }
.profile { display: flex; align-items: center; gap: 13px; height: 88px; padding: 0 14px; border: 1px solid #263446; border-radius: 14px; background: #1a2333; }
.avatar { position: relative; flex: none; display: grid; place-items: center; width: 45px; height: 45px; border-radius: 50%; font-weight: 700; color: #fff; background: linear-gradient(135deg, #3b82f6, #06b6d4); }
.avatar::after { content: ""; position: absolute; right: -3px; bottom: -4px; width: 18px; height: 18px; border: 2px solid #1a2333; border-radius: 50%; background: #0f9f6e; }
.profile-text { display: grid; }
.profile-text b { font-size: 16px; line-height: 20px; }
.profile-text span { font-size: 14px; line-height: 20px; color: #94a3b8; }
.profile-text em { font-style: normal; font-weight: 700; font-size: 14px; line-height: 17px; color: #6ea3f5; }
.logout { display: flex; align-items: center; gap: 13px; height: 52px; margin-top: 18px; padding: 0 15px; font-weight: 700; color: #f87171; }

/* Top bar */
.main { flex: 1; min-width: 0; display: flex; flex-direction: column; background: linear-gradient(135deg, #f8fafc, #f3f8fd 50%, #f5fafe); }
.topbar { flex: none; display: flex; align-items: center; gap: 27px; height: 100px; padding: 0 35px 0 54px; background: #fdfefe; border-bottom: 1px solid #e9edf1; box-shadow: 0 1px 2px #0000000a; }
.crumbs { display: flex; align-items: center; gap: 9px; color: #6b7280; }
.crumbs a { display: flex; align-items: center; gap: 8px; }
.crumbs .here { font-weight: 700; color: #1f2937; }
.crumbs .here svg { color: #3b82f6; }
.field { display: flex; align-items: center; gap: 13px; height: 43px; padding: 0 14px; border: 1px solid #d1d5db; border-radius: 9px; color: #9ca3af; background: #fff; }
.field input { flex: 1; min-width: 0; outline: 0; color: #1f2937; }
.field input::placeholder { color: #757b88; opacity: 1; }
.top-search { flex: 0 1 360px; color: #6b7280; background: #fcfcfd; }
.status { display: flex; align-items: center; gap: 18px; margin-left: auto; }
.pill { display: flex; align-items: center; gap: 9px; height: 43px; padding: 0 14px; border: 1px solid #e5e7eb; border-radius: 13px; font-size: 15px; font-weight: 700; white-space: nowrap; color: #374151; background: #fff; }
.pill svg { color: #3b82f6; }
.time { gap: 7px; padding: 0 13px; border-color: #dbeafe; font-family: "Liberation Mono", monospace; font-weight: 400; background: linear-gradient(90deg, #eff6ff, #ecfeff); }
.online { font-size: 16px; border-color: #d1fae5; color: #047857; background: #f2faf7; }
.online svg { color: #0f9f6e; }
.dot { width: 9px; height: 9px; border-radius: 50%; background: #19a974; }
.bell { position: relative; display: grid; place-items: center; width: 43px; height: 43px; color: #4b5563; }
.bell::after { content: ""; position: absolute; top: 3px; right: 3px; width: 12px; height: 12px; border-radius: 50%; background: #f05252; }
.top-avatar { margin-left: 10px; box-shadow: 0 8px 14px #0000001f; }
.top-avatar::after { width: 14px; height: 14px; right: -5px; border-color: #fff; }

/* Content */
.scroller { flex: 1; min-height: 0; display: flex; }
.content { flex: 1; min-width: 0; overflow-y: auto; scrollbar-width: none; padding: 24px 36px 36px; }
.rail-track { flex: none; width: 8px; background: #f1f5f9; }
.rail-track i { display: block; height: 69%; border-radius: 4px; background: #cbd5e1; }
.page-head { display: flex; justify-content: space-between; align-items: center; gap: 20px; }
h1 { font-size: 35px; line-height: 44px; width: fit-content; background: linear-gradient(90deg, #1f2937, #4b5563); background-clip: text; -webkit-background-clip: text; color: transparent; }
.page-head p { margin-top: 4px; line-height: 24px; color: #4b5563; }
.actions { display: flex; align-items: center; gap: 9px; font-weight: 700; color: #4b5563; }
.tabs { display: flex; height: 42px; margin-right: 6px; border: 1px solid #e5e7eb; border-radius: 13px; overflow: hidden; background: #fff; box-shadow: 0 1px 2px #0000000d; }
.tab, .btn { display: flex; align-items: center; gap: 8px; padding: 0 14px; font-weight: 700; white-space: nowrap; }
.tab { padding: 0 13px; }
.tab.selected { color: #2563eb; background: #ebf4ff; }
.btn { height: 42px; border: 1px solid #e5e7eb; border-radius: 13px; background: #fff; box-shadow: 0 1px 2px #0000000d; }
.btn.primary { height: 40px; border: 0; color: #fff; background: linear-gradient(90deg, #3b82f6, #06b6d4); box-shadow: 0 8px 14px #0000001f; }

.cards { display: grid; grid-template-columns: repeat(3, 1fr); gap: 18px 20px; margin-top: 26px; }
.card { display: flex; justify-content: space-between; align-items: center; height: 150px; padding: 0 22px; border: 1px solid #eef1f4; border-radius: 18px; background: #fff; }
.card h2 { font-size: 16px; line-height: 24px; font-weight: 400; color: #4b5563; }
.card strong { display: block; margin-top: 8px; font-size: 27px; line-height: 36px; color: #1f2937; }
.card p { display: flex; align-items: center; gap: 9px; margin-top: 13px; line-height: 24px; }
.card p span { font-size: 14px; color: #6b7280; }
.up b { color: #057a55; } .up svg { color: #0f9f6e; }
.down b { color: #e02424; } .down svg { color: #f05252; }
.tile { display: grid; place-items: center; width: 54px; height: 54px; border-radius: 16px; color: #fff; box-shadow: 0 8px 14px #00000020; }
.blue { background: linear-gradient(135deg, #3b82f6, #2563eb); }
.orange { background: linear-gradient(135deg, #ff5a1f, #d03801); }
.red { background: linear-gradient(135deg, #f05252, #e02424); }
.green { background: linear-gradient(135deg, #0f9f6e, #057a55); }
.purple { background: linear-gradient(135deg, #ac83fa, #9061f9); }
.indigo { background: linear-gradient(135deg, #6875f5, #5850ec); }
.lifted { transform: translateY(-4px); border-color: #e6e0f2; background: linear-gradient(160deg, #e9dffc, #f1ebfd 50%, #e5d9fb); box-shadow: 0 16px 26px #00000026, inset 0 0 12px #ffffff90; }
.lifted .tile { width: 60px; height: 60px; margin-right: -3px; }

/* Map section */
.ops { margin-top: 28px; border: 1px solid #e2e6ec; border-radius: 18px; overflow: hidden; background: #fff; }
.ops-head { display: flex; align-items: center; gap: 9px; height: 91px; padding: 0 18px; border-bottom: 1px solid #e5e7eb; }
.ops-logo { display: grid; place-items: center; width: 41px; height: 41px; border-radius: 12px; color: #fff; background: linear-gradient(135deg, #3b82f6, #06b6d4); }
.ops-title { flex: 1; margin-left: 4px; }
.ops-title h2 { font-size: 21px; line-height: 28px; }
.ops-title p { line-height: 24px; color: #4b5563; }
.pick { display: grid; align-items: center; }
.pick select, .pick svg { grid-area: 1 / 1; }
.pick select { appearance: none; width: 100%; height: 43px; padding: 0 14px; border: 1px solid #d1d5db; border-radius: 9px; color: #111827; background: #fff; }
.pick svg { justify-self: end; margin-right: 10px; color: #6b7280; stroke-width: 4; pointer-events: none; width: 18px; height: 14px; }
.pick.small { width: 156px; }
.pick.small select { height: 33px; }
.square { display: grid; place-items: center; width: 36px; height: 36px; border-radius: 9px; color: #4b5563; background: #f3f4f6; }
.square.live { color: #057a55; background: #def7ec; }
.ops-body { display: flex; height: 824px; }
.panel { flex: none; width: 359px; padding: 18px 17px 18px 18px; border-right: 1px solid #e5e7eb; }
.caption { display: block; margin: 12px 0 4px; font-weight: 700; color: #374151; }
.field + .caption { margin-top: 16px; }
.panel h3 { margin: 17px 0 8px; font-size: 16px; line-height: 24px; color: #374151; }
.tech-wrap { display: flex; height: 540px; }
.techs { flex: 1; min-width: 0; display: grid; grid-template-columns: minmax(0, 1fr); align-content: start; gap: 9px; }
.bar { flex: none; width: 9px; border-radius: 5px; background: #cbd5e1; }
.techs li { display: flex; align-items: center; gap: 14px; height: 63px; padding: 0 9px; border-radius: 9px; background: #f9fafb; }
.techs li > div { flex: 1; min-width: 0; }
.techs p { display: flex; justify-content: space-between; line-height: 24px; }
.techs p b { color: #1f2937; }
.techs p span { font-size: 14px; color: #6b7280; }
.techs small { display: block; font-size: 14px; line-height: 24px; color: #4b5563; white-space: nowrap; overflow: hidden; text-overflow: ellipsis; }
.badge { flex: none; display: grid; place-items: center; width: 27px; height: 27px; border-radius: 9px; }
.ok { color: #057a55; background: #def7ec; }
.go { color: #2563eb; background: #e1effe; }

/* Map drawing */
.map { position: relative; flex: 1; min-width: 0; overflow: hidden; background: #f8f1e3; }
.map-art { display: block; width: 100%; height: 100%; font-family: Roboto, sans-serif; }
.map-art path { stroke-linejoin: round; }
.st { fill: none; stroke: #ffffffc0; stroke-width: 3; }
.land { fill: #eeead8; } .sand { fill: #f5ead0; } .park { fill: #dcebcf; } .gray { fill: #ecf0ec; } .lake { fill: #84cbf9; }
.road, .rail, .water, .stream, .river, .yedge, .yellow, .oedge, .orange-road, .dash { fill: none; }
.road { stroke: #fff; stroke-width: 8; }
.rail { stroke: #b3b1ab; stroke-width: 4; }
.water { stroke: #84cbf9; stroke-width: 9; }
.stream { stroke: #84cbf9; stroke-width: 5; }
.river { stroke: #84cbf9; stroke-width: 20; }
.yedge { stroke: #f5d79a; stroke-width: 18; }
.yellow { stroke: #ffe8a0; stroke-width: 13; }
.oedge { stroke: #f0b566; stroke-width: 27; }
.orange-road { stroke: #fdc980; stroke-width: 21; }
.dash { stroke: #a9a9a9; stroke-width: 5; stroke-dasharray: 14 8; }
.map-art text { paint-order: stroke; text-anchor: middle; stroke: #ffffffd0; stroke-width: 2px; }
.place text { font-size: 15px; fill: #555; }
.stop text { font-size: 12px; font-weight: 500; fill: #2b7de9; }
.map-art .city { font-size: 26px; font-weight: 500; fill: #333; }
.map-art .street { font-size: 12px; fill: #555; text-anchor: start; }
.map-art .shield { font-size: 12px; font-weight: 700; fill: #444; }

.popup { position: absolute; left: 378px; top: 121px; width: 270px; height: 222px; padding: 30px 24px 0 25px; border-radius: 3px; background: #fff; box-shadow: 0 1px 2px #0000001a; }
.close { position: absolute; right: -3px; top: -3px; width: 12px; height: 28px; border: 1px solid #111; border-radius: 5px; background: #fff; font-size: 12px; line-height: 24px; }
.popup-head { display: flex; justify-content: space-between; align-items: center; font-size: 14px; }
.popup-head span { padding: 0 9px; height: 27px; line-height: 27px; border-radius: 14px; color: #c81e1e; background: #fde8e8; }
.popup p { margin-top: 8px; font-size: 16px; line-height: 23px; color: #4b5563; }
.popup ul { margin-top: 9px; font-size: 14px; line-height: 18px; color: #6b7280; }
.stats { position: absolute; right: 50px; top: 18px; width: 115px; height: 112px; padding: 12px 14px; border-radius: 9px; background: #fffffff0; box-shadow: 0 4px 8px #0000001a; font-size: 14px; line-height: 22px; white-space: nowrap; }
.stats div { display: flex; justify-content: space-between; color: #111827; }
.stats-title { color: #4b5563; }
.stats dd { font-weight: 700; }
.g { color: #057a55; } .b { color: #2563eb; } .o { color: #d03801; }
.controls { position: absolute; right: 11px; top: 11px; display: grid; gap: 11px; }
.ctrl { display: grid; width: 33px; border-radius: 4px; background: #fff; color: #333; box-shadow: 0 0 0 2px #0000001a; }
.ctrl button { display: grid; place-items: center; height: 33px; }
.ctrl button + button { border-top: 1px solid #ddd; }
.glyph { width: 33px; height: 32px; fill: #333; }
```
